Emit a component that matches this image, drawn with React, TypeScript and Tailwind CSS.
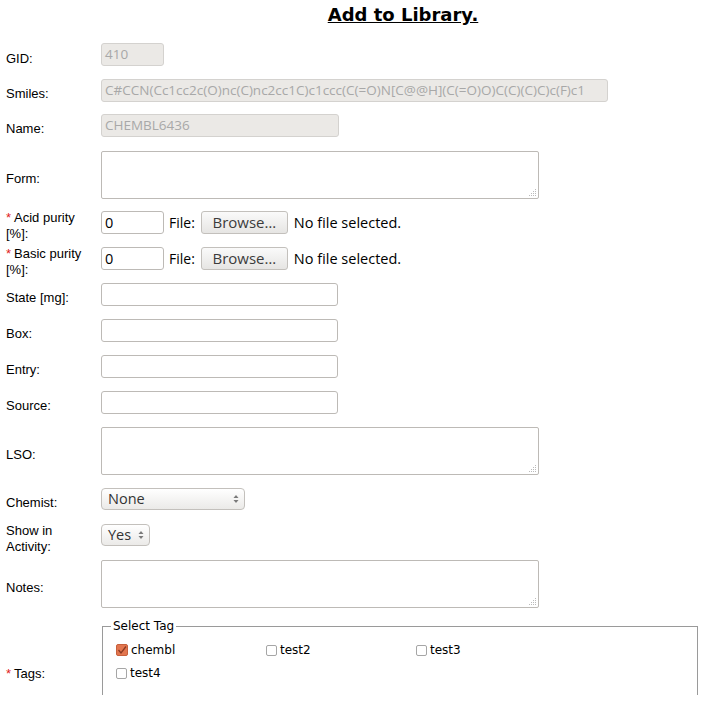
import React from "react";

const lbl = "w-[101px] shrink-0 pl-[6px] pt-[7px] text-[13px] leading-[16px] text-black";
const lblFont = { fontFamily: '"Liberation Sans", Arial, sans-serif' };
const uFont = { fontFamily: '"Open Sans", "Noto Sans", sans-serif' };
const dv = { fontFamily: '"DejaVu Sans", Verdana, sans-serif' };

function Star() {
  return <span className="text-[#e02020] mr-[3px]">*</span>;
}

function Disabled({ w, text }: { w: string; text: string }) {
  return (
    <div
      className={`${w} h-[23px] bg-[#ebe9e6] border border-[#d4d2cf] rounded-[3px] flex items-center px-[3px] text-[13.5px] text-[#a8a8a8] whitespace-nowrap overflow-hidden`}
      style={uFont}
    >
      {text}
    </div>
  );
}

function TextInput({ w, value }: { w: string; value?: string }) {
  return (
    <div
      className={`${w} h-[23px] bg-white border border-[#bdbab6] rounded-[3px] flex items-center px-[3px] text-[14.5px] text-black`}
      style={uFont}
    >
      {value}
    </div>
  );
}

function TextArea() {
  return (
    <div className="relative w-[438px] h-[48px] bg-white border border-[#bdbab6] rounded-[2px]">
      <svg className="absolute right-[1px] bottom-[1px]" width="8" height="8" viewBox="0 0 8 8">
        <rect x="6" y="0" width="1" height="1" fill="#bbb" />
        <rect x="6" y="2" width="1" height="1" fill="#bbb" />
        <rect x="4" y="2" width="1" height="1" fill="#bbb" />
        <rect x="6" y="4" width="1" height="1" fill="#bbb" />
        <rect x="4" y="4" width="1" height="1" fill="#bbb" />
        <rect x="2" y="4" width="1" height="1" fill="#bbb" />
        <rect x="6" y="6" width="1" height="1" fill="#bbb" />
        <rect x="4" y="6" width="1" height="1" fill="#bbb" />
        <rect x="2" y="6" width="1" height="1" fill="#bbb" />
        <rect x="0" y="6" width="1" height="1" fill="#bbb" />
      </svg>
    </div>
  );
}

function Arrows() {
  return (
    <svg width="6" height="10" viewBox="0 0 6 10">
      <path d="M3 1 L5.5 4 L0.5 4 Z" fill="#7a7a7a" />
      <path d="M3 9 L5.5 6 L0.5 6 Z" fill="#7a7a7a" />
    </svg>
  );
}

function Select({ w, text }: { w: string; text: string }) {
  return (
    <div
      className={`${w} h-[22px] border border-[#c3c0bc] rounded-[4px] bg-gradient-to-b from-white to-[#ebeae8] flex items-center justify-between pl-[6px] pr-[5px] text-[14.5px] text-[#333]`}
      style={uFont}
    >
      <span>{text}</span>
      <Arrows />
    </div>
  );
}

function FileRow() {
  return (
    <div className="flex items-center" style={uFont}>
      <TextInput w="w-[63px]" value="0" />
      <span className="ml-[5px] text-[14px] text-black">File:</span>
      <div className="ml-[6px] w-[87px] h-[23px] border border-[#c3c0bc] rounded-[3px] bg-gradient-to-b from-[#fafafa] to-[#e6e5e3] flex items-center justify-center text-[15px] text-[#3c3c3c]">
        Browse…
      </div>
      <span className="ml-[6px] text-[14.5px] text-black">No file selected.</span>
    </div>
  );
}

function Check({ checked }: { checked?: boolean }) {
  if (checked)
    return (
      <div className="w-[12px] h-[12px] rounded-[2px] bg-[#e2764f] border border-[#c8603c] flex items-center justify-center">
        <svg width="10" height="10" viewBox="0 0 10 10">
          <path d="M1.5 5 L4 8 L9 1.5" stroke="#8a3a22" strokeWidth="1.3" fill="none" />
        </svg>
      </div>
    );
  return <div className="w-[11px] h-[11px] rounded-[2px] bg-white border border-[#a6a6a6]" />;
}

function Tag({ checked, text }: { checked?: boolean; text: string }) {
  return (
    <div className="w-[150px] flex items-center gap-[3px] text-[12px] text-black" style={dv}>
      <Check checked={checked} />
      <span>{text}</span>
    </div>
  );
}

export default function App() {
  return (
    <div className="w-[702px] h-[707px] overflow-hidden bg-white relative" style={lblFont}>
      <div className="pl-[104px] pt-[4px] text-center h-[43px]">
        <span className="text-[18px] font-bold underline leading-[21px] text-black" style={dv}>
          Add to Library.
        </span>
      </div>

      <div className="flex items-center h-[23px]">
        <div className={`${lbl} pt-[9px]`} style={lblFont}>GID:</div>
        <Disabled w="w-[63px]" text="410" />
      </div>

      <div className="flex items-center h-[23px] mt-[13px]">
        <div className={lbl} style={lblFont}>Smiles:</div>
        <Disabled w="w-[507px]" text="C#CCN(Cc1cc2c(O)nc(C)nc2cc1C)c1ccc(C(=O)N[C@@H](C(=O)O)C(C)(C)C)c(F)c1" />
      </div>

      <div className="flex items-center h-[23px] mt-[12px]">
        <div className={lbl} style={lblFont}>Name:</div>
        <Disabled w="w-[238px]" text="CHEMBL6436" />
      </div>

      <div className="flex items-center h-[48px] mt-[14px]">
        <div className={lbl} style={lblFont}>Form:</div>
        <TextArea />
      </div>

      <div className="flex items-center h-[23px] mt-[12px]">
        <div className={lbl} style={lblFont}>
          <Star />Acid purity
          <br />
          [%]:
        </div>
        <FileRow />
      </div>

      <div className="flex items-center h-[23px] mt-[13px]">
        <div className={lbl} style={lblFont}>
          <Star />Basic purity
          <br />
          [%]:
        </div>
        <FileRow />
      </div>

      <div className="flex items-center h-[23px] mt-[13px]">
        <div className={lbl} style={lblFont}>State [mg]:</div>
        <TextInput w="w-[237px]" />
      </div>

      <div className="flex items-center h-[23px] mt-[13px]">
        <div className={lbl} style={lblFont}>Box:</div>
        <TextInput w="w-[237px]" />
      </div>

      <div className="flex items-center h-[23px] mt-[13px]">
        <div className={lbl} style={lblFont}>Entry:</div>
        <TextInput w="w-[237px]" />
      </div>

      <div className="flex items-center h-[22px] mt-[13px]">
        <div className={lbl} style={lblFont}>Source:</div>
        <TextInput w="w-[237px]" />
      </div>

      <div className="flex items-center h-[48px] mt-[14px]">
        <div className={lbl} style={lblFont}>LSO:</div>
        <TextArea />
      </div>

      <div className="flex items-center h-[22px] mt-[13px]">
        <div className={lbl} style={lblFont}>Chemist:</div>
        <Select w="w-[144px]" text="None" />
      </div>

      <div className="flex items-center h-[22px] mt-[14px]">
        <div className={lbl} style={lblFont}>
          Show in
          <br />
          Activity:
        </div>
        <Select w="w-[49px]" text="Yes" />
      </div>

      <div className="flex items-center h-[48px] mt-[14px]">
        <div className={lbl} style={lblFont}>Notes:</div>
        <TextArea />
      </div>

      <div className="flex items-start mt-[11px]">
        <div className={`${lbl} mt-[40px]`} style={lblFont}>
          <Star />Tags:
        </div>
        <fieldset className="ml-[1px] w-[596px] h-[76px] border border-b-0 border-[#9a9a9a] pl-[8px] pr-[8px]">
          <legend className="px-[2px] text-[12px] leading-[14px] text-black" style={dv}>
            Select Tag
          </legend>
          <div className="ml-[5px] mt-[10px] flex flex-col gap-[9px]">
            <div className="flex h-[14px]">
              <Tag checked text="chembl" />
              <Tag text="test2" />
              <Tag text="test3" />
            </div>
            <div className="flex h-[14px]">
              <Tag text="test4" />
            </div>
          </div>
        </fieldset>
      </div>
    </div>
  );
}
